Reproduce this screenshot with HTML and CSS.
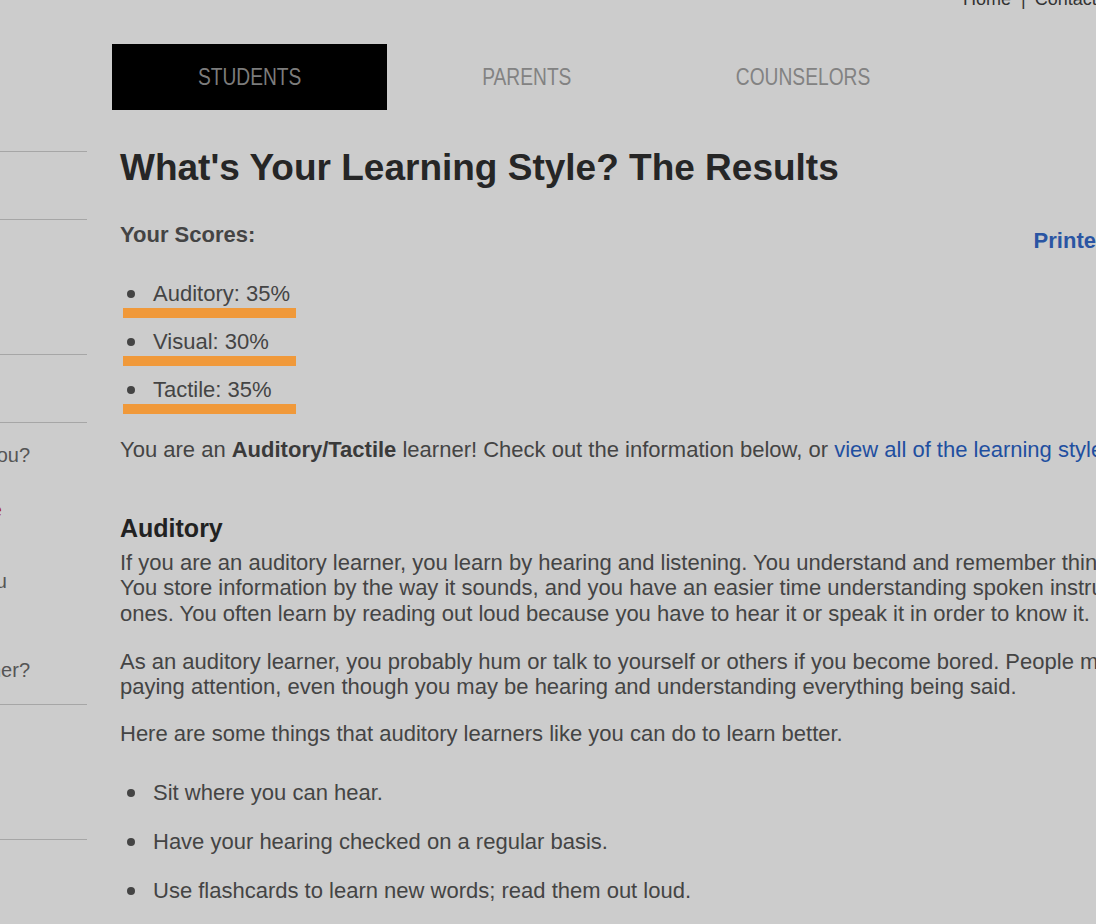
FILE: index.html
```html
<!DOCTYPE html>
<html lang="en">
<head>
<meta charset="utf-8">
<title>What's Your Learning Style? The Results</title>
<link rel="stylesheet" href="styles.css">
</head>
<body>
<div class="page">
  <aside class="sidebar">
    <div class="side-item h68"></div>
    <div class="side-item h135"></div>
    <div class="side-item h68"></div>
    <div class="side-item h282">
      <a class="side-link l1" href="#">What Kind of Learner Are You?</a>
      <a class="side-link red l2" href="#">Your Learning Style Profile</a>
      <a class="side-link l3" href="#">Study Tips Made for You</a>
      <a class="side-link l4" href="#">Are You a Visual Learner?</a>
    </div>
    <div class="side-item h135"></div>
    <div class="side-item last"></div>
  </aside>

  <main class="main">
    <div class="toplinks">
      <div class="toplinks-row">
        <a href="#">Home</a><span class="sep">|</span><a href="#">Contact Us</a>
      </div>
    </div>

    <nav class="tabs">
      <a class="tab active" href="#"><span>STUDENTS</span></a>
      <a class="tab" href="#"><span>PARENTS</span></a>
      <a class="tab" href="#"><span>COUNSELORS</span></a>
    </nav>

    <div class="content">
      <h1 class="title">What's Your Learning Style? The Results</h1>

      <div class="scores-row">
        <span class="scores-label">Your Scores:</span>
        <a class="print-link" href="#">Printer-Friendly Version</a>
      </div>

      <ul class="score-list">
        <li>Auditory: 35%</li>
        <li>Visual: 30%</li>
        <li>Tactile: 35%</li>
      </ul>

      <p class="result">You are an <strong>Auditory/Tactile</strong> learner! Check out the information below, or <a href="#">view all of the learning styles</a>.</p>

      <h2 class="section-title">Auditory</h2>
      <p class="p1">If you are an auditory learner, you learn by hearing and listening. You understand and remember things you have heard. You store information by the way it sounds, and you have an easier time understanding spoken instructions than written ones. You often learn by reading out loud because you have to hear it or speak it in order to know it.</p>
      <p class="p2">As an auditory learner, you probably hum or talk to yourself or others if you become bored. People may think you are not paying attention, even though you may be hearing and understanding everything being said.</p>
      <p class="p3">Here are some things that auditory learners like you can do to learn better.</p>

      <ul class="tips">
        <li>Sit where you can hear.</li>
        <li>Have your hearing checked on a regular basis.</li>
        <li>Use flashcards to learn new words; read them out loud.</li>
      </ul>
    </div>
  </main>
</div>
</body>
</html>
```

FILE: styles.css
```css
html {
  overflow: hidden;
}

body {
  margin: 0;
  background: #cccccc;
  font-family: "Liberation Sans", Arial, sans-serif;
  color: #444444;
}

a {
  text-decoration: none;
  color: inherit;
}

.page {
  display: flex;
  align-items: flex-start;
  margin-left: -313px;
}

/* ---------- sidebar ---------- */
.sidebar {
  flex: none;
  width: 400px;
  margin-top: 151px;
}

.side-item {
  box-sizing: border-box;
  border-top: 1px solid #a6a6a6;
}

.h68 { height: 68px; }
.h135 { height: 135px; }
.h282 { height: 282px; }
.last { height: 80px; }

.side-link {
  display: block;
  font-size: 20px;
  line-height: 24px;
  color: #555555;
  text-align: right;
  white-space: nowrap;
}

.side-link.red { color: #a82418; }

.l1 { margin-top: 20px; padding-right: 57px; }
.l2 { margin-top: 31px; padding-right: 85px; }
.l3 { margin-top: 47px; padding-right: 80px; }
.l4 { margin-top: 65px; padding-right: 57px; }

/* ---------- main ---------- */
.main {
  flex: none;
  width: 1300px;
  margin-left: 25px;
}

.toplinks {
  display: flow-root;
  height: 44px;
}

.toplinks-row {
  margin-top: -11px;
  padding-left: 851px;
  font-size: 18px;
  line-height: 20px;
  color: #333333;
  white-space: nowrap;
}

.toplinks-row .sep {
  margin: 0 9px 0 10px;
}

.tabs {
  display: flex;
  gap: 2px;
  height: 66px;
}

.tab {
  width: 275px;
  display: flex;
  align-items: center;
  justify-content: center;
  color: #828282;
  font-size: 24px;
}

.tab span {
  display: inline-block;
  transform: scaleX(0.8);
  margin-top: -1px;
}

.tab.active {
  background: #000000;
  color: #7c7c7c;
}

.content {
  width: 1190px;
  padding-left: 8px;
  font-size: 22px;
  line-height: 25.5px;
}

.title {
  margin: 37px 0 0;
  font-size: 37px;
  line-height: 42px;
  font-weight: bold;
  color: #262626;
}

.scores-row {
  display: flex;
  justify-content: space-between;
  align-items: flex-start;
  margin-top: 32.6px;
  padding-right: 27px;
}

.scores-label {
  font-weight: bold;
  color: #444444;
}

.print-link {
  margin-top: 6px;
  font-weight: bold;
  color: #2a55a3;
}

.score-list {
  list-style: none;
  margin: 27.5px 0 0 3px;
  padding: 0;
}

.score-list li {
  display: flex;
  align-items: flex-start;
  width: 173px;
  padding-bottom: 2px;
  border-bottom: 10px solid #f0993a;
  margin-bottom: 10.5px;
}

.score-list li:last-child {
  margin-bottom: 0;
}

.score-list li::before,
.tips li::before {
  content: "";
  flex: none;
  width: 8px;
  height: 8px;
  border-radius: 50%;
  background: #444444;
  margin: 9px 18px 0 4px;
}

.result {
  margin: 22.5px 0 0;
}

.result strong {
  color: #3a3a3a;
}

.result a {
  color: #1f4fa0;
}

.section-title {
  margin: 50.9px 0 0;
  font-size: 25px;
  line-height: 30px;
  font-weight: bold;
  color: #222222;
}

.p1 { margin: 6.6px 0 0; }
.p2 { margin: 22.5px 0 0; }
.p3 { margin: 21px 0 0; }

.tips {
  list-style: none;
  margin: 33.5px 0 0 3px;
  padding: 0;
}

.tips li {
  display: flex;
  align-items: flex-start;
  margin-bottom: 23.5px;
}

.tips li::before {
  margin-top: 9px;
}
```
